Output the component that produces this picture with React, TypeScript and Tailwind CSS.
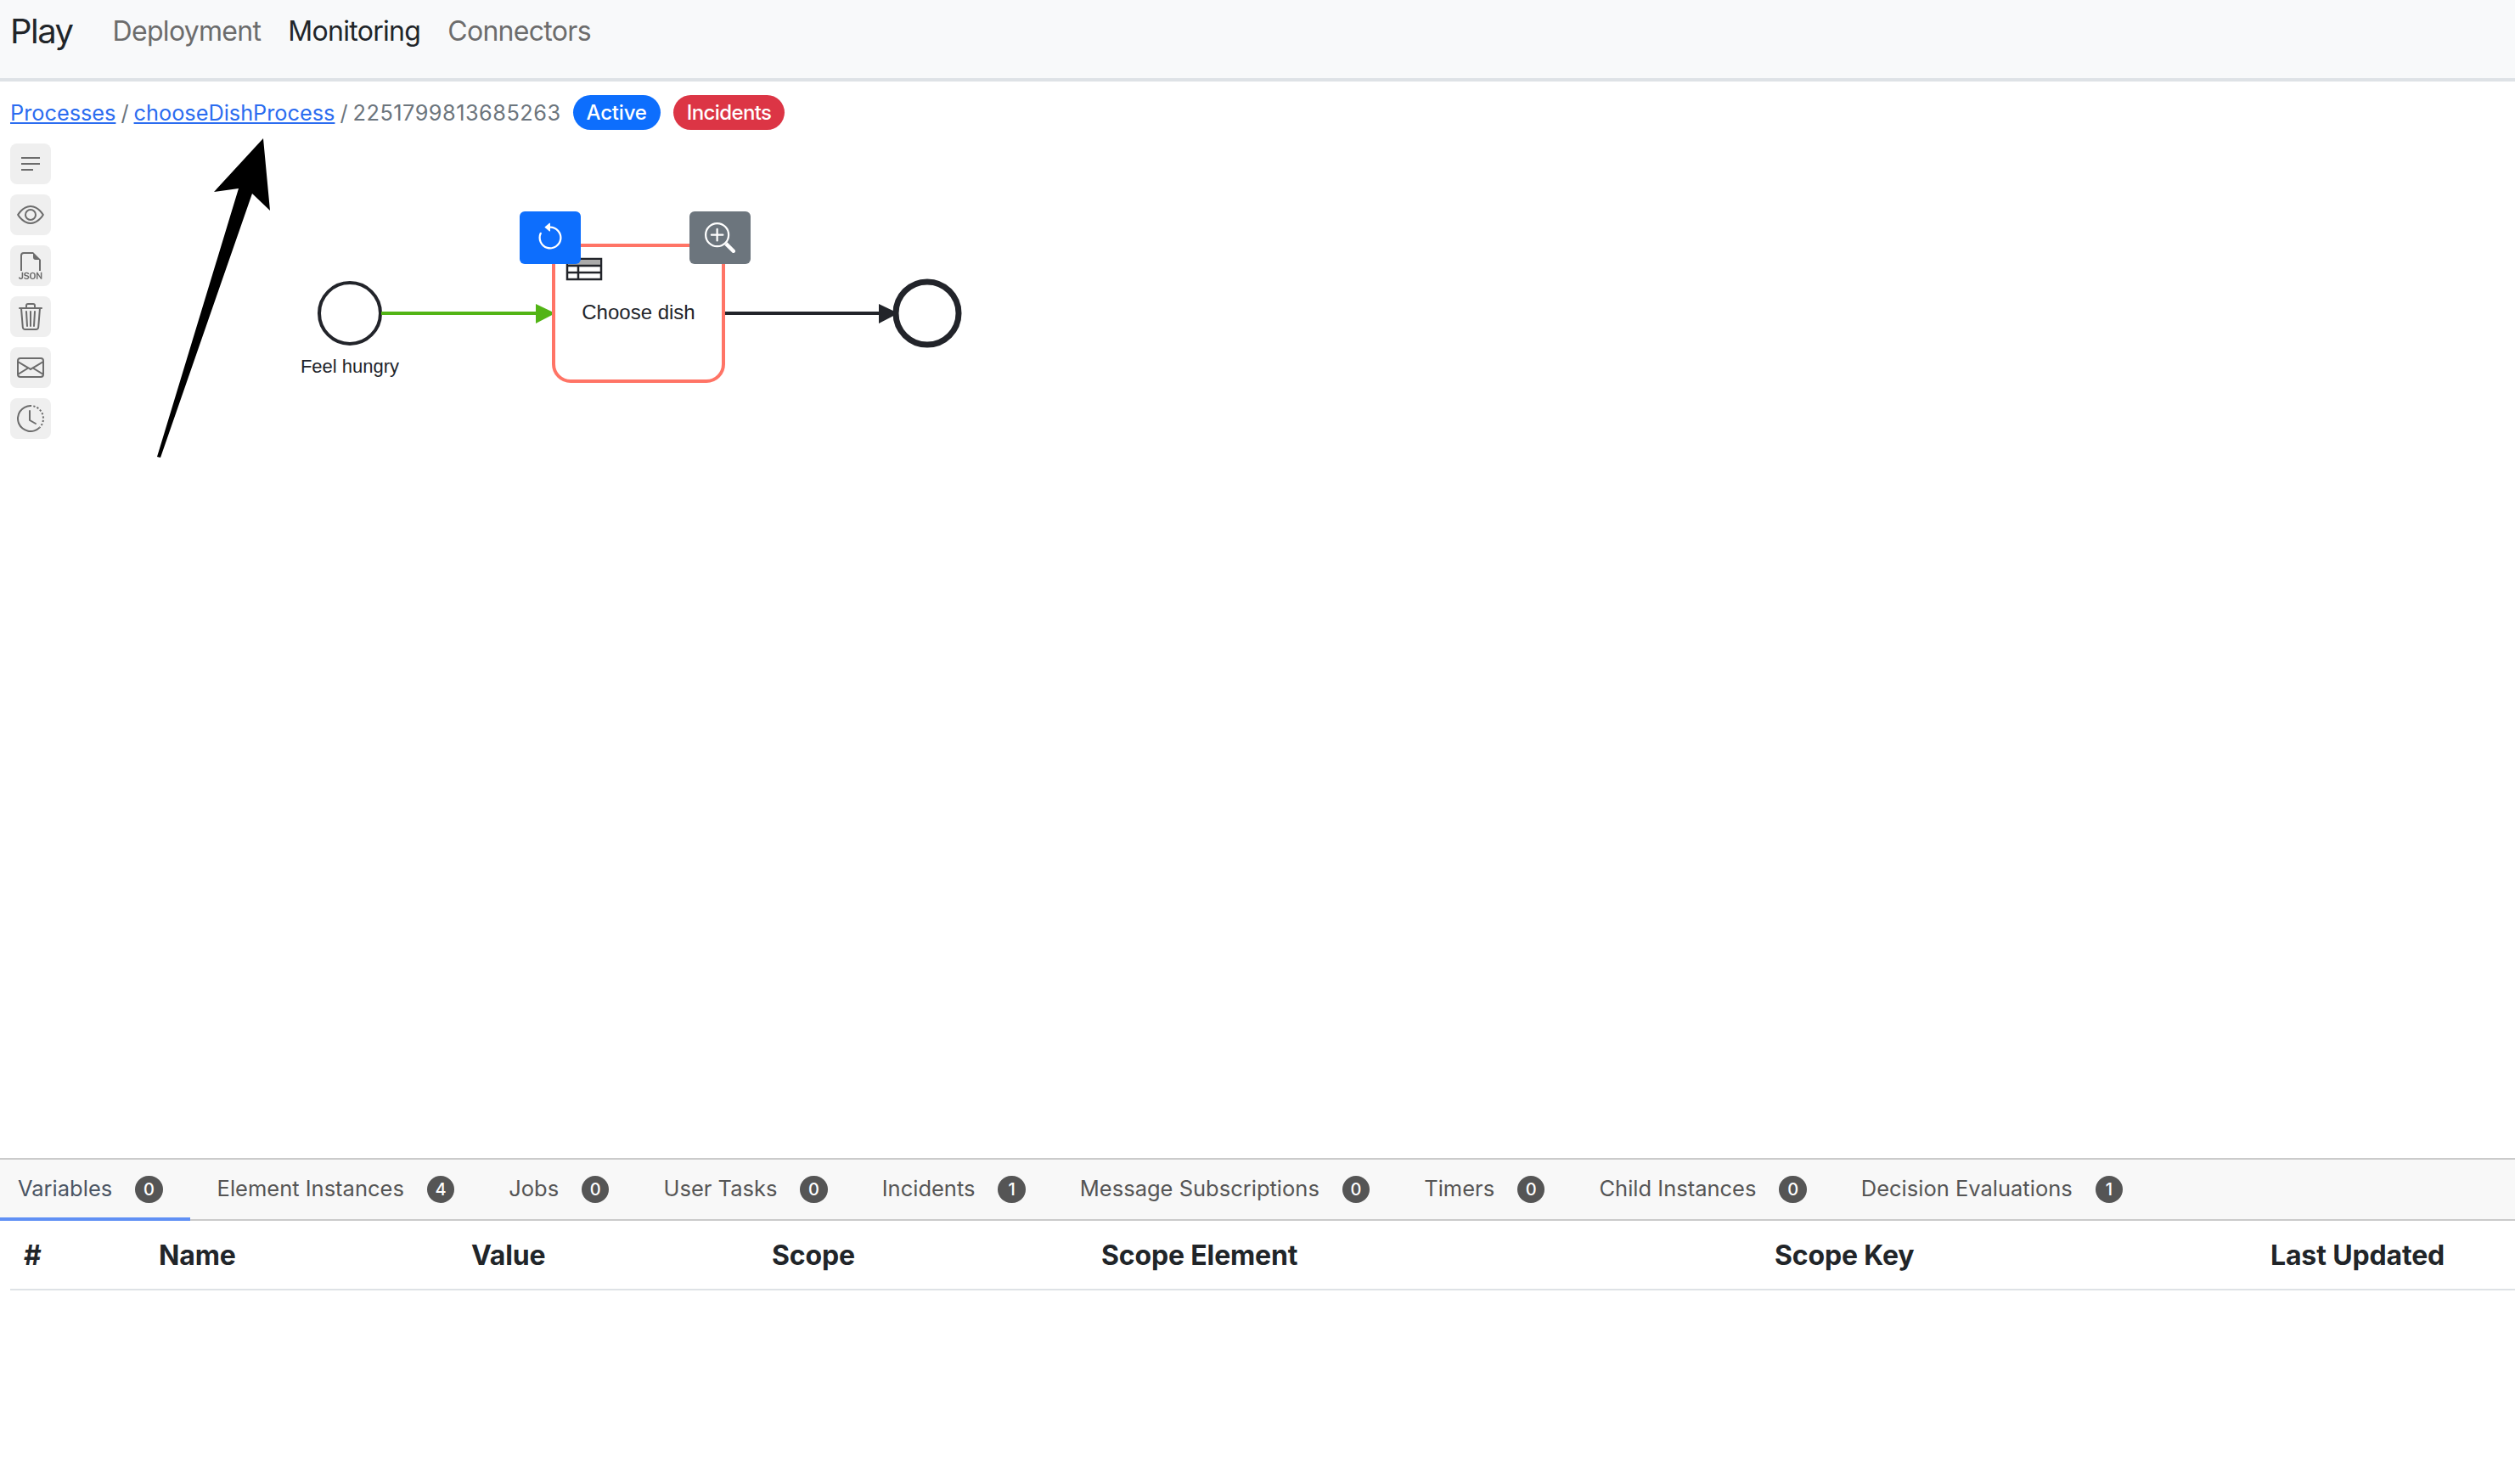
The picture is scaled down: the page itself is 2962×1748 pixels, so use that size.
import React from 'react';
import { BsArrowCounterclockwise, BsClockHistory, BsEnvelope, BsEye, BsFiletypeJson, BsTrash3, BsZoomIn } from 'react-icons/bs';

const font = { fontFamily: 'Inter, "Liberation Sans", sans-serif' };

const tabs = [
  { label: 'Variables', count: 0 },
  { label: 'Element Instances', count: 4 },
  { label: 'Jobs', count: 0 },
  { label: 'User Tasks', count: 0 },
  { label: 'Incidents', count: 1 },
  { label: 'Message Subscriptions', count: 0 },
  { label: 'Timers', count: 0 },
  { label: 'Child Instances', count: 0 },
  { label: 'Decision Evaluations', count: 1 },
];

const columns = ['#', 'Name', 'Value', 'Scope', 'Scope Element', 'Scope Key', 'Last Updated'];

const ListIcon = () => (
  <svg width="32" height="32" viewBox="0 0 32 32" fill="none" stroke="currentColor" strokeWidth="2">
    <path d="M5 9h22M5 16h22M5 23h14" />
  </svg>
);

const toolbar = [
  <ListIcon key="list" />,
  <BsEye key="eye" size={32} />,
  <BsFiletypeJson key="json" size={32} />,
  <BsTrash3 key="trash" size={32} />,
  <BsEnvelope key="mail" size={32} />,
  <BsClockHistory key="clock" size={32} />,
];

const Diagram = () => (
  <svg className="absolute left-0 top-0 pointer-events-none" width="1400" height="500" viewBox="0 96 1400 500" fill="none">
    {/* annotation arrow */}
    <polygon points="310,163 318,248 297,228 189,539 185,538 281,222 252,226" fill="#000" />
    {/* start event */}
    <circle cx="412" cy="369" r="36" stroke="#22242a" strokeWidth="4" fill="#fff" />
    <text x="412" y="439" textAnchor="middle" fontSize="22" fill="#22242a" fontFamily="'Liberation Sans', sans-serif">Feel hungry</text>
    {/* flows */}
    <line x1="449" y1="369" x2="634" y2="369" stroke="#52b415" strokeWidth="4" />
    <polygon points="631,358 654,369 631,381" fill="#52b415" />
    <line x1="854" y1="369" x2="1038" y2="369" stroke="#22242a" strokeWidth="4" />
    <polygon points="1035,358 1058,369 1035,381" fill="#22242a" />
    {/* task */}
    <rect x="652" y="289" width="200" height="160" rx="20" stroke="#ff7466" strokeWidth="4" fill="#fff" />
    <text x="752" y="376" textAnchor="middle" fontSize="24" fill="#22242a" fontFamily="'Liberation Sans', sans-serif">Choose dish</text>
    <rect x="668" y="305" width="40" height="24" stroke="#22242a" strokeWidth="2.5" fill="#fff" />
    <rect x="669" y="306" width="38" height="7" fill="#aaa" />
    <path d="M668 313h40M668 321h40M681 313v16" stroke="#22242a" strokeWidth="2.5" />
    {/* end event */}
    <circle cx="1092" cy="369" r="37" stroke="#22242a" strokeWidth="7" fill="#fff" />
  </svg>
);

export default function App() {
  return (
    <div className="flex flex-col h-screen overflow-hidden bg-white" style={font}>
      <nav className="flex items-center h-[96px] pb-[18px] px-[12px] bg-[#f8f9fa] border-b-4 border-[#dee2e6] shrink-0">
        <span className="text-[40px] tracking-[-1.5px] text-[#212529] mr-[47px]">Play</span>
        <div className="flex gap-[32px] text-[32px] tracking-[-0.7px]">
          <span className="text-[#6c6c6c]">Deployment</span>
          <span className="text-[#212529]">Monitoring</span>
          <span className="text-[#6c6c6c]">Connectors</span>
        </div>
      </nav>

      <div className="relative flex-1 min-h-0 px-[12px] pt-[16px]">
        <Diagram />
        <div className="relative flex items-center h-[41px] text-[25.3px] text-[#6c757d] whitespace-nowrap">
          <a className="text-[#2b6cf0] underline">Processes</a>
          <span className="mx-[6px]">/</span>
          <a className="text-[#2b6cf0] underline">chooseDishProcess</a>
          <span className="mx-[6px]">/</span>
          <span className="tracking-[0.5px]">2251799813685263</span>
          <span className="ml-[14px] flex items-center h-[41px] px-[16px] rounded-full bg-[#0d6efd] text-white text-[24px] tracking-[-0.2px] font-medium">Active</span>
          <span className="ml-[15px] flex items-center h-[41px] px-[16px] rounded-full bg-[#dc3545] text-white text-[24px] tracking-[-0.6px] font-medium">Incidents</span>
        </div>

        <div className="relative flex flex-col gap-[12px] mt-[16px] w-[48px]">
          {toolbar.map((icon, i) => (
            <button key={i} className="flex items-center justify-center w-[48px] h-[48px] rounded-[8px] bg-[#efefef] text-[#6c6c6c]">
              {icon}
            </button>
          ))}
        </div>

        {/* overlays on the diagram */}
        <button className="absolute left-[612px] top-[153px] flex items-center justify-center w-[72px] h-[62px] rounded-[6px] bg-[#0d6efd] text-white">
          <BsArrowCounterclockwise size={36} />
        </button>
        <button className="absolute left-[812px] top-[153px] flex items-center justify-center w-[72px] h-[62px] rounded-[6px] bg-[#6c757d] text-white">
          <BsZoomIn size={36} />
        </button>
      </div>

      <div className="h-[384px] shrink-0">
        <div className="flex items-stretch h-[74px] bg-[#f8f8f8] border-t-2 border-b-2 border-[#cbcbcb]">
          {tabs.map((t, i) => (
            <div
              key={t.label}
              className={
                i === 0
                  ? 'relative flex items-center gap-[27px] pl-[21px] pr-[32px] text-[25.5px] text-[#4b5563]'
                  : 'relative flex items-center gap-[27px] pl-[21px] pr-[32px] ml-[11px] text-[25.5px] text-[#555]'
              }
            >
              <span className="pb-[2px]">{t.label}</span>
              <span className="flex items-center justify-center min-w-[32.35px] h-[32px] rounded-full bg-[#555] text-white text-[20px] font-medium">{t.count}</span>
              {i === 0 && <span className="absolute left-0 right-0 bottom-[-2px] h-[4px] bg-[#6090f5]" />}
            </div>
          ))}
        </div>
        <div className="ml-[12px] grid grid-cols-[159px_368px_354px_388px_793px_584px_1fr] items-center h-[82px] pt-[2px] border-b-2 border-[#dee2e6] text-[32px] font-bold tracking-[-0.15px] text-[#212529]">
          {columns.map(c => (
            <div key={c} className="pl-[16px]">{c}</div>
          ))}
        </div>
      </div>
    </div>
  );
}
